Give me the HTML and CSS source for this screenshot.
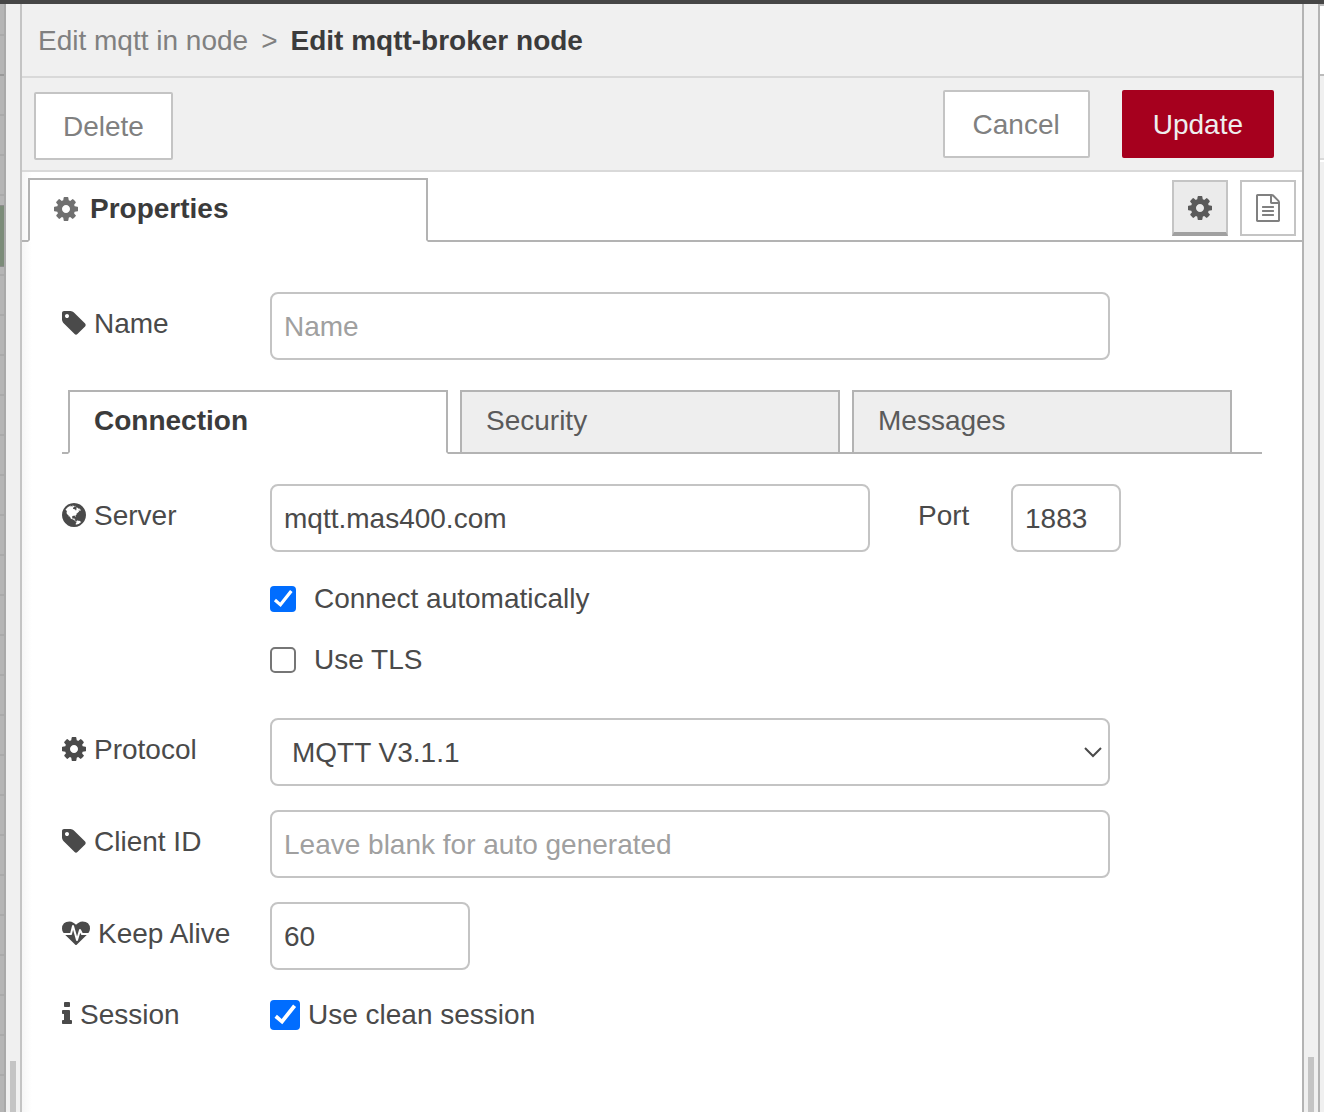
FILE: index.html
```html
<!DOCTYPE html>
<html lang="en">
<head>
<meta charset="utf-8">
<title>Edit mqtt-broker node</title>
<link rel="stylesheet" href="styles.css">
</head>
<body>
<svg class="defs" aria-hidden="true">
  <symbol id="cog" viewBox="128 0 1536 1792"><path d="M1152 896q0-106-75-181t-181-75-181 75-75 181 75 181 181 75 181-75 75-181zm512-109v222q0 12-8 23t-20 13l-185 28q-19 54-39 91 35 50 107 138 10 12 10 25t-9 23q-27 37-99 108t-94 71q-12 0-26-9l-138-108q-44 23-91 38-16 136-29 186-7 28-36 28h-222q-14 0-24.5-8.5t-11.5-21.5l-28-184q-49-16-90-37l-141 107q-10 9-25 9-14 0-25-11-126-114-165-168-7-10-7-23 0-12 8-23 15-21 51-66.5t54-70.5q-27-50-41-99l-183-27q-13-2-21-12.5t-8-23.5v-222q0-12 8-23t19-13l186-28q14-46 39-92-40-57-107-138-10-12-10-24 0-10 9-23 26-36 98.5-107.5t94.5-71.5q13 0 26 10l138 107q44-23 91-38 16-136 29-186 7-28 36-28h222q14 0 24.5 8.5t11.5 21.5l28 184q49 16 90 37l142-107q9-9 24-9 13 0 25 10 129 119 165 170 7 8 7 22 0 12-8 23-15 21-51 66.5t-54 70.5q26 50 41 98l183 28q13 2 21 12.5t8 23.5z"/></symbol>
  <symbol id="tag" viewBox="128 0 1536 1792"><path d="M576 448q0-53-37.5-90.5t-90.5-37.5-90.5 37.5-37.5 90.5 37.5 90.5 90.5 37.5 90.5-37.5 37.5-90.5zm1067 576q0 53-37 90l-491 492q-39 37-91 37-53 0-90-37l-715-716q-38-37-64.5-101t-26.5-117v-416q0-52 38-90t90-38h416q53 0 117 26.5t102 64.5l715 714q37 39 37 91z"/></symbol>
  <symbol id="globe" viewBox="128 0 1536 1792"><path d="M896 128q209 0 385.5 103t279.5 279.5 103 385.5-103 385.5-279.5 279.5-385.5 103-385.5-103-279.5-279.5-103-385.5 103-385.5 279.5-279.5 385.5-103zm274 521q-2 1-9.5 9.5t-13.5 9.5q2 0 4.5-5t5-11 3.5-7q6-7 22-15 14-6 52-12 34-8 51 11-2-2 9.5-13t14.5-12q3-2 15-4.5t15-7.5l2-22q-12 1-17.5-7t-6.5-21q0 2-6 8 0-7-4.5-8t-11.5 1-9 1q-10-3-15-7.5t-8-16.5-4-15q-2-5-9.5-11t-9.5-10q-1-2-2.5-5.5t-3-6.5-4-5.5-5.5-2.5-7 5-7.5 10-4.5 5q-3-2-6-1.5t-4.5 1-4.5 3-5 3.5q-3 2-8.5 3t-8.5 2q15-5-1-11-10-4-16-3 9-4 7.5-12t-8.5-14h5q-1-4-8.5-8.5t-17.5-8.5-13-6q-8-5-34-9.5t-33-.5q-5 6-4.5 10.5t4 14 3.5 12.5q1 6-5.5 13t-6.5 12q0 7 14 15.5t10 21.5q-3 8-16 16t-16 12q-5 8-1.5 18.5t10.5 16.5q2 2 1.5 4t-3.5 4.5-5.5 4-6.5 3.5l-3 2q-11 5-20.5-6t-13.5-26q-7-25-16-30-23-8-29 1-5-13-41-26-25-9-58-4 6-1 0-15-7-15-19-12 3-6 4-17.5t1-13.5q3-13 12-23 1-1 7-8.5t9.5-13.5.5-6q35 4 50-11 5-5 11.5-17t10.5-17q9-6 14-5.5t14.5 5.5 14.5 5q14 1 15.5-11t-7.5-20q12 1 3-17-4-7-8-9-12-4-27 5-8 4 2 8-1-1-9.5 10.5t-16.5 17.5-16-5q-1-1-5.5-13.5t-9.5-13.5q-8 0-16 15 3-8-11-15t-24-8q19-12-8-27-7-4-20.5-5t-19.5 4q-5 7-5.5 11.5t5 8 10.5 5.5 11.5 4 8.5 3q14 10 8 14-2 1-8.5 3.5t-11.5 4.5-6 4q-3 4 0 14t-2 14q-5-5-9-17.5t-7-16.5q7 9-25 6l-10-1q-4 0-16 2t-20.5 1-13.5-8q-4-8 0-20 1-4 4-2-4-3-11-9.5t-10-8.5q-46 15-94 41 6 1 12-1 5-2 13-6.5t10-5.5q34-14 42-7l5-5q14 16 20 25-7-4-30-1-20 6-22 12 7 12 5 18-4-3-11.5-10t-14.5-11-15-5q-16 0-22 1-146 80-235 222 7 7 12 8 4 1 5 9t2.5 11 11.5-3q9 8 3 19 1-1 44 27 19 17 21 21 3 11-10 18-1-2-9-9t-9-4q-3 5 .5 18.5t10.5 12.5q-7 0-9.5 16t-2.5 35.5-1 23.5l2 1q-3 12 5.5 34.5t21.5 19.5q-13 3 20 43 6 8 8 9 3 2 12 7.5t15 10 10 10.5q4 5 10 22.5t14 23.5q-2 6 9.5 20t10.5 23q-1 0-2.5 1t-2.5 1q3 7 15.5 14t15.5 13q1 3 2 10t3 11 8 2q2-20-24-62-15-25-17-29-3-5-5.5-15.5t-4.5-14.5q2 0 6 1.5t8.5 3.5 7.5 4 2 3q-3 7 2 17.5t12 18.5 17 19 12 13q6 6 14 19.5t0 13.5q9 0 20 10.5t17 19.5q5 8 8 26t5 24q2 7 8.5 13.5t12.5 9.5l16 8 13 7q5 2 18.5 10.5t21.5 11.5q10 4 16 4t14.5-2.5 13.5-3.5q15-2 29 15t21 21q36 19 55 11-2 1 .5 7.5t8 15.5 9 14.5 5.5 8.5q5 6 18 15t18 15q6-4 7-9-3 8 7 20t18 10q14-3 14-32-31 15-49-18 0-1-2.5-5.5t-4-8.5-2.5-8.5 0-7.5 5-3q9 0 10-3.5t-2-12.5-4-13q-1-8-11-20t-12-15q-5 9-16 8t-16-9q0 1-1.5 5.5t-1.5 6.5q-13 0-15-1 1-3 2.5-17.5t3.5-22.5q1-4 5.5-12t7.5-14.5 4-12.5-4.5-9.5-17.5-2.5q-19 1-26 20-1 3-3 10.5t-5 11.5-9 7q-7 3-24 2t-24-5q-13-8-22.5-29t-9.5-37q0-10 2.5-26.5t3-25-5.5-24.5q3-2 9-9.5t10-10.5q2-1 4.5-1.5t4.5 0 4-1.5 3-6q-1-1-4-3-3-3-4-3 7 3 28.5-1.5t27.5 1.5q15 11 22-2 0-1-2.5-9.5t-.5-13.5q5 27 29 9 3 3 15.5 5t17.5 5q3 2 7 5.5t5.5 4.5 5-.5 8.5-6.5q10 14 12 24 11 40 19 44 7 3 11 2t4.5-9.5 0-14-1.5-12.5l-1-8v-18l-1-8q-15-3-18.5-12t1.5-18.5 15-18.5q1-1 8-3.5t15.5-6.5 12.5-8q21-19 15-35 7 0 11-9-1 0-5-3t-7.5-5-4.5-2q9-5 2-16 5-3 7.5-11t7.5-10q9 12 21 2 8-8 1-16 5-7 20.5-10.5t18.5-9.5q7 2 8-2t1-12 3-12q4-5 15-9t13-5l17-11q3-4 0-4 18 2 31-11 10-11-6-20 3-6-3-9.5t-15-5.5q3-1 11.5-.5t10.5-1.5q15-10-7-16-17-5-43 12zm-163 877q206-36 351-189-3-3-12.5-4.5t-12.5-3.5q-18-7-24-8 1-7-2.5-13t-8-9-12.5-8-11-7q-2-2-7-6t-7-5.5-7.5-4.5-8.5-2-10 1l-3 1q-3 1-5.5 2.5t-5.5 3-4 3 0 2.5q-21-17-36-22-5-1-11-5.5t-10.5-7-10-1.5-11.5 7q-5 5-6 15t-2 13q-7-5 0-17.5t2-18.5q-3-6-10.5-4.5t-12 4.5-11.5 8.5-9 6.5-8.5 5.5-8.5 7.5q-3 4-6 12t-5 11q-2-4-11.5-6.5t-9.5-5.5q2 10 4 35t5 38q7 31-12 48-27 25-29 40-4 22 12 26 0 7-8 20.5t-7 21.5q0 6 2 16z"/></symbol>
  <symbol id="heartbeat" viewBox="0 0 1792 1792"><path d="M1280 1024h305q-5 6-10 10.5t-9 7.5l-3 4-623 600q-18 18-44 18t-44-18l-624-602q-5-2-21-20h369q22 0 39.5-13.5t22.5-34.5l70-281 190 667q6 20 23 33t39 13q21 0 38-13t23-33l146-485 56 112q18 35 57 35zm512-403q0 145-103 275h-369l-111-221q-8-17-25.5-27t-36.5-8q-45 5-56 46l-129 430-196-686q-6-20-23.5-33t-39.5-13-39 13.5-22 34.5l-116 464h-423q-103-130-103-275 0-220 127-344t351-124q62 0 126.5 21.5t120 58 95.5 68.5 76 68q36-36 76-68t95.5-68.5 120-58 126.5-21.5q224 0 351 124t127 344z"/></symbol>
  <symbol id="info" viewBox="576 0 640 1792"><path d="M1216 1344v128q0 26-19 45t-45 19h-512q-26 0-45-19t-19-45v-128q0-26 19-45t45-19h64v-384h-64q-26 0-45-19t-19-45v-128q0-26 19-45t45-19h384q26 0 45 19t19 45v576h64q26 0 45 19t19 45zm-128-1152v192q0 26-19 45t-45 19h-256q-26 0-45-19t-19-45v-192q0-26 19-45t45-19h256q26 0 45 19t19 45z"/></symbol>
  <symbol id="file" viewBox="128 0 1536 1792"><path d="M1596 380q28 28 48 76t20 88v1152q0 40-28 68t-68 28h-1344q-40 0-68-28t-28-68v-1600q0-40 28-68t68-28h896q40 0 88 20t76 48zm-444-244v376h376q-10-29-22-41l-313-313q-12-12-41-22zm384 1528v-1024h-416q-40 0-68-28t-28-68v-416h-768v1536h1280zm-1024-864q0-14 9-23t23-9h704q14 0 23 9t9 23v64q0 14-9 23t-23 9h-704q-14 0-23-9t-9-23v-64zm736 224q14 0 23 9t9 23v64q0 14-9 23t-23 9h-704q-14 0-23-9t-9-23v-64q0-14 9-23t23-9h704zm0 256q14 0 23 9t9 23v64q0 14-9 23t-23 9h-704q-14 0-23-9t-9-23v-64q0-14 9-23t23-9h704z"/></symbol>
</svg>

<div class="workspace">
  <div class="canvas"><div class="canvas-node"></div></div>
  <div class="separator"><span class="grip"></span></div>

  <main class="tray">
    <h1 class="tray-header"><span class="crumb">Edit mqtt in node</span><span class="crumb">&gt;</span><span>Edit mqtt-broker node</span></h1>

    <div class="toolbar">
      <button type="button" class="btn btn-delete">Delete</button>
      <div class="toolbar-right">
        <button type="button" class="btn">Cancel</button>
        <button type="button" class="btn btn-primary">Update</button>
      </div>
    </div>

    <div class="tabbar">
      <button type="button" class="tab tab-properties active"><svg class="icon"><use href="#cog"/></svg>Properties</button>
      <div class="tab-tools">
        <button type="button" class="tool selected" aria-label="Properties"><svg class="icon"><use href="#cog"/></svg></button>
        <button type="button" class="tool" aria-label="Description"><svg class="icon"><use href="#file"/></svg></button>
      </div>
    </div>

    <form class="form">
      <div class="row">
        <label class="label" for="name"><svg class="icon"><use href="#tag"/></svg>Name</label>
        <input class="field wide" id="name" type="text" placeholder="Name">
      </div>

      <div class="subtabs">
        <button type="button" class="tab active">Connection</button>
        <button type="button" class="tab">Security</button>
        <button type="button" class="tab">Messages</button>
      </div>

      <div class="row">
        <label class="label" for="server"><svg class="icon"><use href="#globe"/></svg>Server</label>
        <input class="field server" id="server" type="text" value="mqtt.mas400.com">
        <label class="label port-label" for="port">Port</label>
        <input class="field port" id="port" type="text" value="1883">
      </div>
      <div class="checks">
        <label class="check"><input type="checkbox" checked>Connect automatically</label>
        <label class="check"><input type="checkbox">Use TLS</label>
      </div>
      <div class="row">
        <label class="label" for="protocol"><svg class="icon"><use href="#cog"/></svg>Protocol</label>
        <div class="select-wrap wide">
          <select class="field" id="protocol"><option>MQTT V3.1.1</option></select>
          <svg class="chevron" viewBox="0 0 18 12"><path d="M1 2l8 8 8-8"/></svg>
        </div>
      </div>
      <div class="row">
        <label class="label" for="client"><svg class="icon"><use href="#tag"/></svg>Client ID</label>
        <input class="field wide" id="client" type="text" placeholder="Leave blank for auto generated">
      </div>
      <div class="row row-keepalive">
        <label class="label" for="keepalive"><svg class="icon icon-heart"><use href="#heartbeat"/></svg>Keep Alive</label>
        <input class="field short" id="keepalive" type="text" value="60">
      </div>
      <div class="row">
        <label class="label" for="session"><svg class="icon icon-info"><use href="#info"/></svg>Session</label>
        <label class="check check-large"><input type="checkbox" id="session" checked>Use clean session</label>
      </div>
    </form>
  </main>

  <div class="separator separator-right"><span class="grip"></span></div>
  <div class="sidebar"><div class="sidebar-tab"></div><div class="sidebar-tools"></div></div>
</div>
</body>
</html>
```
FILE: styles.css
```css
* { box-sizing: border-box; }

body {
  margin: 0;
  font: 28px/32px "Liberation Sans", Arial, sans-serif;
  color: #4a4a4a;
}

button, input, select { font: inherit; color: inherit; margin: 0; }

.defs { display: none; }

.icon { width: 24px; height: 28px; fill: currentColor; flex: none; }
.icon-heart { width: 28px; }
.icon-info { width: 10px; }

.workspace {
  display: grid;
  grid-template-columns: 6px 14px minmax(0, 1fr) 14px 6px;
  min-height: 100vh;
  border-top: 4px solid #464646;
}

/* Shaded canvas behind the tray */
.canvas {
  padding-top: 201px;
  background:
    linear-gradient(#999, #999) 0 70px / 4px 2px no-repeat,
    linear-gradient(to right, transparent 4px, #a9a9a9 4px),
    repeating-linear-gradient(#b5b5b5 0 30px, #aaa 30px 32px, #b5b5b5 32px 40px);
}
.canvas-node {
  width: 4px;
  height: 62px;
  background: #7c8c79;
  border: solid #8d8d8d;
  border-width: 1px 0;
}

.separator {
  display: flex;
  align-items: flex-end;
  justify-content: center;
  background: #f0f0f0;
}
.grip { width: 6px; height: 51px; background: #c4c4c4; }
.separator-right .grip { height: 55px; }

.sidebar { border-left: 2px solid #b3b3b3; background: #f0f0f0; }
.sidebar-tab { height: 72px; background: #fff; border-top: 2px solid #bbb; border-bottom: 2px solid #bbb; }
.sidebar-tools { height: 84px; border-bottom: 2px solid #d9d9d9; box-shadow: 0 2px #fff; }

.tray {
  min-width: 0;
  background: linear-gradient(to right, #f6f6f6, #fff 10px);
  border: solid #c4c4c4;
  border-width: 0 2px;
  border-right-color: #b3b3b3;
}

.tray-header {
  display: flex;
  gap: 13px;
  margin: 0;
  padding: 2px 16px 0;
  font-size: 28px;
  line-height: 70px;
  color: #3b3b3b;
  background: #f0f0f0;
  border-bottom: 2px solid #d9d9d9;
}
.crumb { font-weight: normal; color: #808080; }

.toolbar {
  display: flex;
  justify-content: space-between;
  height: 94px;
  padding: 12px 28px 12px 12px;
  background: #f0f0f0;
  border-bottom: 2px solid #d9d9d9;
}
.toolbar-right { display: flex; gap: 32px; }
.btn {
  height: 68px;
  padding: 2px 28px 0;
  color: #808080;
  background: #fff;
  border: 2px solid #c4c4c4;
  border-radius: 2px;
}
.btn-delete { margin-top: 2px; padding: 2px 27px 0; }
.btn-primary { padding: 2px 29px 0; color: #eee; background: #a6001e; border-color: #a6001e; }

/* Tab strips: the active tab overlaps the base line */
.tabbar, .subtabs {
  display: flex;
  gap: 12px;
  padding-left: 6px;
  box-shadow: inset 0 -2px #b3b3b3;
}
.tabbar { justify-content: space-between; padding: 6px 6px 0; }
.tab {
  width: 380px;
  height: 64px;
  padding: 0 24px 2px;
  line-height: 58px;
  text-align: left;
  color: #5a5a5a;
  background: #eee;
  border: 2px solid #b3b3b3;
  border-radius: 0;
}
.tab.active { font-weight: bold; color: #3b3b3b; background: #fff; border-bottom-color: #fff; }
.tab-properties { display: flex; align-items: center; gap: 12px; width: 400px; }
.tab-properties .icon { color: #707070; }
.tab-tools { display: flex; gap: 12px; padding-top: 2px; }
.tool {
  display: flex;
  align-items: center;
  justify-content: center;
  width: 56px;
  height: 56px;
  padding: 0;
  color: #808080;
  background: #fff;
  border: 2px solid #c4c4c4;
}
.tool.selected { padding-top: 2px; color: #5a5a5a; background: #ebebeb; border-bottom: 4px solid #a0a0a0; }

.form { padding: 50px 40px 0; }
.row { display: flex; align-items: flex-start; margin-bottom: 24px; }
.row-keepalive { margin-bottom: 13px; }
.label {
  display: flex;
  align-items: center;
  gap: 8px;
  flex: 0 0 208px;
  height: 64px;
}
.label .icon { margin-bottom: 2px; }
.field {
  height: 68px;
  padding: 2px 12px 0;
  background: #fff;
  border: 2px solid #c4c4c4;
  border-radius: 8px;
  min-width: 0;
}
.field::placeholder { color: #a0a0a0; opacity: 1; }
.wide { flex: 0 1 840px; }
.server { flex: 0 1 600px; }
.short { width: 200px; }
.port-label { flex: 0 0 93px; margin-left: 48px; }
.port { width: 110px; }

.subtabs { margin: 30px 0; }
.subtabs + .row { margin-bottom: 16px; }

.checks { padding-left: 208px; margin-bottom: 28px; }
.check { display: flex; align-items: center; gap: 18px; height: 60px; }
.checks .check:first-child { height: 62px; }

input[type="checkbox"] {
  appearance: none;
  display: grid;
  width: 26px;
  height: 26px;
  border: 2px solid #767676;
  border-radius: 5px;
  background: #fff;
}
input[type="checkbox"]:checked { background: #006dff; border: 0; border-radius: 4px; }
input[type="checkbox"]:checked::before {
  content: "";
  background: #fff;
  clip-path: polygon(15% 59%, 23% 49%, 39% 63%, 77% 15%, 87% 23%, 41% 81%);
}
.check-large { gap: 8px; height: 64px; }
.check-large input[type="checkbox"] { width: 30px; height: 30px; }

.select-wrap { display: grid; align-items: center; }
.select-wrap > * { grid-area: 1 / 1; }
.select-wrap .field { width: 100%; padding: 2px 20px 0; appearance: none; }
.chevron {
  justify-self: end;
  width: 18px;
  height: 12px;
  margin-right: 8px;
  fill: none;
  stroke: #4a4a4a;
  stroke-width: 2;
  pointer-events: none;
}
```
